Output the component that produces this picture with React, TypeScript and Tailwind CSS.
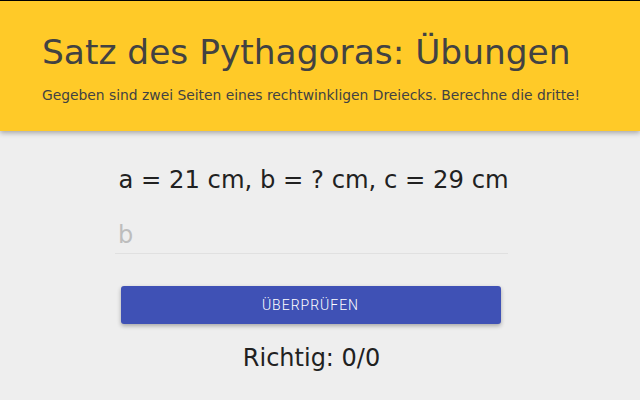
export default function App() {
  return (
    <div className="min-h-[400px] bg-[#eeeeee] border-t border-black font-['DejaVu_Sans',sans-serif]">
      <header className="h-[130px] bg-[#ffca28] px-[42px] pt-[30px] shadow-[0_2px_5px_rgba(0,0,0,0.3)] relative">
        <h1 className="text-[34.4px] leading-[42px] text-[#424242]">Satz des Pythagoras: Übungen</h1>
        <p className="mt-[12px] text-[13.85px] leading-[20px] text-[#424242]">
          Gegeben sind zwei Seiten eines rechtwinkligen Dreiecks. Berechne die dritte!
        </p>
      </header>

      <main className="pr-[17px]">
        <div className="mx-auto w-[393px] flex flex-col items-center">
          <div className="mt-[34px] translate-x-[2px] whitespace-nowrap text-[24.25px] leading-[30px] text-[#212121]">
            a = 21 cm, b = ? cm, c = 29 cm
          </div>
          <input
            placeholder="b"
            className="mt-[21px] w-full h-[38px] px-[3px] bg-transparent border-b border-[#e0e0e0] text-[24px] text-[#212121] placeholder:text-[#bdbdbd] outline-none"
          />
          <button className="mt-[32px] w-[380px] h-[38px] -translate-x-[1px] rounded-[3px] bg-[#3f51b5] text-white text-[14px] font-light tracking-[1px] font-['Roboto',sans-serif] shadow-[0_2px_4px_rgba(0,0,0,0.3)]">
            ÜBERPRÜFEN
          </button>
          <div className="mt-[19px] text-[24px] leading-[30px] text-[#212121]">Richtig: 0/0</div>
        </div>
      </main>
    </div>
  );
}
